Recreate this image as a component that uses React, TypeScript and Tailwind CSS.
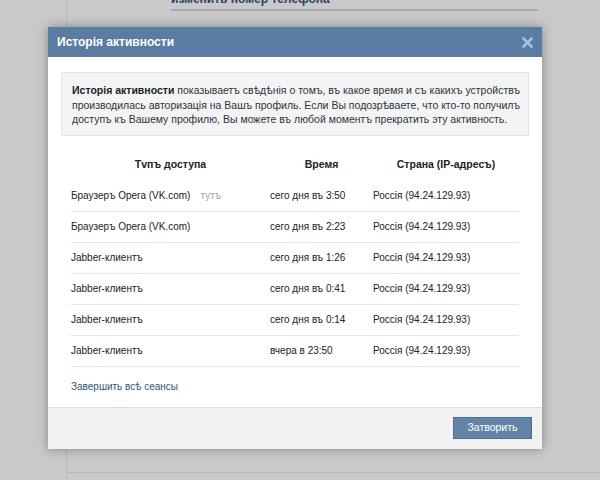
import React from "react";

const rows = [
  { kind: "Браузеръ Opera (VK.com)", here: true, time: "сего дня въ 3:50" },
  { kind: "Браузеръ Opera (VK.com)", here: false, time: "сего дня въ 2:23" },
  { kind: "Jabber-клиентъ", here: false, time: "сего дня въ 1:26" },
  { kind: "Jabber-клиентъ", here: false, time: "сего дня въ 0:41" },
  { kind: "Jabber-клиентъ", here: false, time: "сего дня въ 0:14" },
  { kind: "Jabber-клиентъ", here: false, time: "вчера в 23:50" },
];

const CloseIcon = () => (
  <svg width="11" height="11" viewBox="0 0 11 11">
    <path d="M1.5 1.5 L9.5 9.5 M9.5 1.5 L1.5 9.5" stroke="#a9c0da" strokeWidth="2.6" strokeLinecap="square" />
  </svg>
);

export default function App() {
  return (
    <div
      className="relative h-[480px] w-[600px] overflow-hidden bg-[#c9c9c9] text-[10px] text-[#222]"
      style={{ fontFamily: '"Liberation Sans", Arial, sans-serif' }}
    >
      {/* page behind the overlay */}
      <div className="flex h-full">
        <div className="w-[67px] shrink-0 border-r border-[#b9b9b9]" />
        <div className="flex flex-1 flex-col">
          <div className="ml-[104px] mr-[62px] -mt-[10px] border-b-2 border-[#a9a9b1] pb-[1px]">
            <span className="text-[12px] font-bold text-[#2c4466]">изменить номер телефона</span>
          </div>
          <div className="ml-[170px] mt-[14px] text-[#999]">Текущій номеръ: ••••</div>
          <div className="mt-auto mb-[7px] border-t border-[#b9b9b9]" />
        </div>
      </div>

      {/* dialog */}
      <div className="absolute left-[48px] top-[27px] w-[494px] bg-white shadow-[0_0_10px_rgba(0,0,0,0.35)]">
        <div className="flex h-[30px] items-center justify-between bg-[#5a7ca2] pl-[9px] pr-[9px]">
          <span className="text-[12px] font-bold text-white">Исторія активности</span>
          <CloseIcon />
        </div>

        <div className="px-[13px] pt-[15px]">
          <div className="whitespace-nowrap border border-[#e1e4e8] bg-[#f3f4f6] pl-[10px] pr-[8px] pt-[10px] pb-[8px] text-[10.5px] leading-[14.5px] text-[#333]">
            <b className="text-[#222]">Исторія активности</b> показываетъ свѣдѣнія о томъ, въ какое время и съ какихъ устройствъ
            <br />
            производилась авторизація на Вашъ профиль. Если Вы подозрѣваете, что кто-то получилъ
            <br />
            доступъ къ Вашему профилю, Вы можете въ любой моментъ прекратить эту активность.
          </div>

          <div className="ml-[10px] mt-[14px] w-[448px] whitespace-nowrap">
            <div className="flex h-[31px] items-center text-[10.5px] font-bold text-[#222]">
              <div className="w-[199px] text-center">Тvпъ доступа</div>
              <div className="w-[103px] text-center">Время</div>
              <div className="flex-1 text-center">Страна (IP-адресъ)</div>
            </div>
            {rows.map((r, i) => (
              <div key={i} className="flex h-[31px] items-center border-b border-[#e6e8eb]">
                <div className="w-[199px]">
                  {r.kind}
                  {r.here && <span className="ml-[10px] text-[#a3a3a3]">тутъ</span>}
                </div>
                <div className="w-[103px]">{r.time}</div>
                <div className="flex-1">Россія (94.24.129.93)</div>
              </div>
            ))}
            <div className="pt-[13px] pb-[13px] leading-[14px] text-[#2b587a]">Завершить всѣ сеансы</div>
          </div>
        </div>

        <div className="flex justify-end border-t border-[#dadee3] bg-[#f2f2f2] pt-[9px] pb-[10px] pr-[10px]">
          <button className="h-[22px] w-[79px] border border-[#4e6f95] bg-[#6384a9] text-[10.5px] text-white">
            Затворить
          </button>
        </div>
      </div>
    </div>
  );
}
